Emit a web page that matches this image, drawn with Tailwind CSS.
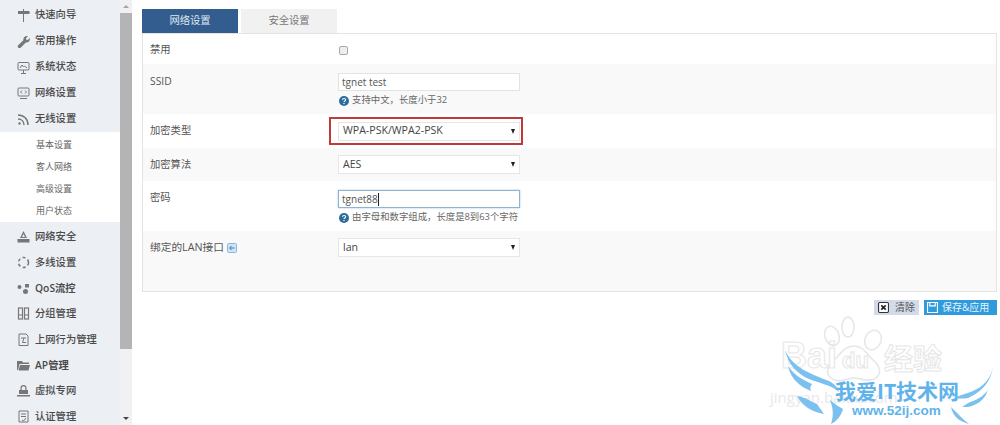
<!DOCTYPE html>
<html lang="zh-CN">

<head>
    <meta charset="UTF-8">
    <title>无线设置</title>
    <script src="https://cdn.jsdelivr.net/npm/@tailwindcss/browser@4"></script>
</head>

<body class="relative w-[1000px] h-[425px] overflow-hidden bg-white text-[#555] font-['Open_Sans','Noto_Sans_CJK_SC',sans-serif]">
    <div class="flex h-[425px]">
        <!-- sidebar -->
        <aside class="flex w-[132px] shrink-0">
            <nav class="w-[120px] bg-[#eceff4] pt-[2px] text-[10.3px] text-[#4a4a4a] font-medium overflow-hidden">
                <a class="flex items-center h-[26px] pl-[17px] gap-[5px]">
                    <svg class="w-[13px] h-[13px] text-[#777]" viewBox="0 0 13 13" fill="currentColor"><path d="M6 0h1v2h5l1 1.500-1 1.500H7v8H6V5H1V2h5z"/></svg>
                    快速向导
                </a>
                <a class="flex items-center h-[26px] pl-[17px] gap-[5px]">
                    <svg class="w-[13px] h-[13px] text-[#777]" viewBox="0 0 13 13" fill="currentColor"><path d="M1 12.500 .5 11l6-6c-.5-2 1-4 3.500-4l1 .3-2 2 .3 1.400 1.400.3 2-2 .2 1c0 2.500-2 4-4 3.500l-6 6z"/></svg>
                    常用操作
                </a>
                <a class="flex items-center h-[26px] pl-[17px] gap-[5px]">
                    <svg class="w-[13px] h-[13px] text-[#777]" viewBox="0 0 13 13" fill="none" stroke="currentColor"><rect x="1" y="1.500" width="11" height="7.500" rx="1"/><path d="M3 7l2-3 1.500 2 1-1L10 7M6.500 9v3M4 12.500h5"/></svg>
                    系统状态
                </a>
                <a class="flex items-center h-[26px] pl-[17px] gap-[5px]">
                    <svg class="w-[13px] h-[13px] text-[#777]" viewBox="0 0 13 13" fill="none" stroke="currentColor"><rect x="1" y="1" width="11" height="8" rx="1"/><path d="M5 3.500 3.500 5 5 6.500M8 3.500 9.500 5 8 6.500M3 11.500h7"/></svg>
                    网络设置
                </a>
                <a class="flex items-center h-[26px] pl-[17px] gap-[5px]">
                    <svg class="w-[13px] h-[13px] text-[#777]" viewBox="0 0 13 13" fill="none" stroke="currentColor" stroke-width="1.500"><circle cx="2.500" cy="10.500" r="1.200" fill="currentColor" stroke="none"/><path d="M1 6c3.500 0 6 2.500 6 6M1 2c6 0 10 4 10 10"/></svg>
                    无线设置
                </a>
                <div class="bg-white h-[90px] mb-[2px] pt-[2px] text-[9px] text-[#666] font-normal">
                    <a class="flex items-center h-[22px] pl-[36px]">基本设置</a>
                    <a class="flex items-center h-[22px] pl-[36px]">客人网络</a>
                    <a class="flex items-center h-[22px] pl-[36px]">高级设置</a>
                    <a class="flex items-center h-[22px] pl-[36px]">用户状态</a>
                </div>
                <a class="flex items-center h-[25.7px] pl-[17px] gap-[5px]">
                    <svg class="w-[13px] h-[13px] text-[#777]" viewBox="0 0 13 13" fill="currentColor"><path d="M6.500 1 10 8H3zM6.500 4 5 7h3zM.5 9h12v3.500H.5z"/></svg>
                    网络安全
                </a>
                <a class="flex items-center h-[25.7px] pl-[17px] gap-[5px]">
                    <svg class="w-[13px] h-[13px] text-[#777]" viewBox="0 0 13 13" fill="none" stroke="currentColor" stroke-width="1.500" stroke-dasharray="3 2.500"><circle cx="6.500" cy="6.500" r="5"/></svg>
                    多线设置
                </a>
                <a class="flex items-center h-[25.7px] pl-[17px] gap-[5px] font-semibold">
                    <svg class="w-[13px] h-[13px] text-[#777]" viewBox="0 0 13 13" fill="currentColor"><circle cx="2.500" cy="5" r="2"/><rect x="8" y="2" width="4" height="3.500"/><circle cx="8.500" cy="9.500" r="2.500"/></svg>
                    QoS流控
                </a>
                <a class="flex items-center h-[25.7px] pl-[17px] gap-[5px]">
                    <svg class="w-[13px] h-[13px] text-[#777]" viewBox="0 0 13 13" fill="none" stroke="currentColor" stroke-width="1.200"><rect x="1.500" y="1" width="4" height="11"/><rect x="7.500" y="1" width="4" height="11"/><path d="M1.500 8h4M7.500 8h4"/></svg>
                    分组管理
                </a>
                <a class="flex items-center h-[25.7px] pl-[17px] gap-[5px]">
                    <svg class="w-[13px] h-[13px] text-[#777]" viewBox="0 0 13 13" fill="none" stroke="currentColor"><path d="M2 1h7l2 2v9.500H2zM4 5h5M7 5 5.500 9.500H9"/></svg>
                    上网行为管理
                </a>
                <a class="flex items-center h-[25.7px] pl-[17px] gap-[5px] font-semibold">
                    <svg class="w-[13px] h-[13px] text-[#777]" viewBox="0 0 13 13" fill="currentColor"><path d="M0 2h5l1 1.500h6V5H2.500L1 11H0zM3 6h10l-1.500 5.500H1.500z"/></svg>
                    AP管理
                </a>
                <a class="flex items-center h-[25.7px] pl-[17px] gap-[5px]">
                    <svg class="w-[13px] h-[13px] text-[#777]" viewBox="0 0 13 13" fill="currentColor"><path d="M3.500 6V4a3 3 0 0 1 6 0v2H8.300V4a1.800 1.800 0 0 0-3.600 0v2zM2 6h9v4H2zM0 11h13v1.500H0z"/></svg>
                    虚拟专网
                </a>
                <a class="flex items-center h-[25.7px] pl-[17px] gap-[5px]">
                    <svg class="w-[13px] h-[13px] text-[#777]" viewBox="0 0 13 13" fill="none" stroke="currentColor"><path d="M2 1h9v11H2zM4 4h5M4 6.500h5M5 10l1.500 1L9 8"/></svg>
                    认证管理
                </a>
            </nav>
            <!-- scrollbar -->
            <div class="w-[12px] bg-[#f1f1f1] flex flex-col items-center justify-between">
                <div class="flex flex-col items-center w-full h-[349px]">
                    <span class="h-[13px] flex items-center"><span class="border-x-[3px] border-x-transparent border-b-[3px] border-b-[#a3a3a3]"></span></span>
                    <span class="w-full flex-1 bg-[#b4b4b4]"></span>
                </div>
                <span class="h-[13px] flex items-center"><span class="border-x-[3px] border-x-transparent border-t-[3px] border-t-[#444]"></span></span>
            </div>
        </aside>

        <!-- main -->
        <main class="flex-1 pl-[10px] pr-[3px] pt-[9px] text-[10.3px]">
            <div class="flex gap-[3px] h-[24px]">
                <a class="flex items-center justify-center w-[96px] bg-[#335d8e] text-[#dfe7f0]">网络设置</a>
                <a class="flex items-center justify-center w-[96px] bg-[#f1f1f1] text-[#777]">安全设置</a>
            </div>
            <form class="border border-[#e4e4e4] h-[259px]">
                <div class="flex items-center h-[30px] pt-[2px] px-[7px]">
                    <label class="w-[188px]">禁用</label>
                    <input type="checkbox" class="appearance-none w-[9px] h-[9px] ml-[1px] border border-[#aaa] rounded-[2px] bg-[#eee]">
                </div>
                <div class="flex h-[50px] px-[7px] pt-[9px] bg-[#f9f9f9]">
                    <label class="w-[188px] pt-px">SSID</label>
                    <div class="w-[182px]">
                        <input type="text" value="tgnet test" class="block w-full h-[18px] px-[3px] bg-white border border-[#e3e3e3] text-[10px] text-[#555] outline-none">
                        <p class="flex items-center gap-[3px] mt-[2px] h-[15px] text-[9.400px] text-[#666]">
                            <svg class="w-[10px] h-[10px] text-[#2b6c9e] ml-px" viewBox="0 0 10 10"><circle cx="5" cy="5" r="5" fill="currentColor"/><path d="M3.400 3.800C3.500 2.100 6.700 2.100 6.700 3.800 6.700 5 5 4.900 5 6.100" fill="none" stroke="#fff" stroke-width="1.100"/><rect x="4.400" y="6.900" width="1.200" height="1.200" fill="#fff"/></svg>
                            支持中文，长度小于32
                        </p>
                    </div>
                </div>
                <div class="flex items-center h-[34px] px-[7px]">
                    <label class="w-[188px]">加密类型</label>
                    <div class="relative w-[182px] h-[19px] bg-white border border-[#e6e6e6] flex items-center pl-[4px] text-[10.600px] text-[#444]">
                        <select class="appearance-none w-full outline-none">
                            <option>WPA-PSK/WPA2-PSK</option>
                        </select>
                        <span class="absolute right-[4px] top-[6px] border-x-[2.500px] border-x-transparent border-t-[5px] border-t-[#222]"></span>
                    </div>
                </div>
                <div class="flex items-center h-[33px] px-[7px] bg-[#f9f9f9]">
                    <label class="w-[188px]">加密算法</label>
                    <div class="relative w-[182px] h-[19px] bg-white border border-[#e6e6e6] flex items-center pl-[4px] text-[10.600px] text-[#444]">
                        <select class="appearance-none w-full outline-none">
                            <option>AES</option>
                        </select>
                        <span class="absolute right-[4px] top-[6px] border-x-[2.500px] border-x-transparent border-t-[5px] border-t-[#222]"></span>
                    </div>
                </div>
                <div class="flex h-[50px] px-[7px] pt-[9px]">
                    <label class="w-[188px]">密码</label>
                    <div class="w-[182px]">
                        <div class="flex items-center w-full h-[18px] px-[3px] bg-white border border-[#8fb3d3] shadow-[0_0_2px_#a9c8e4] text-[10px] text-[#555]">
                            <span>tgnet88</span><span class="w-px h-[13px] bg-[#222]"></span>
                        </div>
                        <p class="flex items-center gap-[3px] mt-[2px] h-[15px] text-[9.400px] text-[#666] whitespace-nowrap">
                            <svg class="w-[10px] h-[10px] text-[#2b6c9e] ml-px shrink-0" viewBox="0 0 10 10"><circle cx="5" cy="5" r="5" fill="currentColor"/><path d="M3.400 3.800C3.500 2.100 6.700 2.100 6.700 3.800 6.700 5 5 4.900 5 6.100" fill="none" stroke="#fff" stroke-width="1.100"/><rect x="4.400" y="6.900" width="1.200" height="1.200" fill="#fff"/></svg>
                            由字母和数字组成，长度是8到63个字符
                        </p>
                    </div>
                </div>
                <div class="flex h-[60px] px-[7px] pt-[7px] bg-[#f9f9f9]">
                    <label class="flex items-center gap-[3px] w-[188px] h-[19px] text-[10.700px]">
                        绑定的LAN接口
                        <svg class="w-[10px] h-[10px]" viewBox="0 0 10 10"><rect x=".5" y=".5" width="9" height="9" rx="1" fill="#cfe4f5" stroke="#8db8d8"/><path d="M7.500 5H3M4.500 3 2.500 5l2 2" fill="none" stroke="#3b82b8"/></svg>
                    </label>
                    <div class="relative w-[182px] h-[19px] bg-white border border-[#e6e6e6] flex items-center pl-[4px] text-[10.600px] text-[#444]">
                        <select class="appearance-none w-full outline-none">
                            <option>lan</option>
                        </select>
                        <span class="absolute right-[4px] top-[6px] border-x-[2.500px] border-x-transparent border-t-[5px] border-t-[#222]"></span>
                    </div>
                </div>
            </form>
            <div class="flex justify-end gap-[5px] mt-[8px] text-[10px]">
                <button class="flex items-center gap-[6px] w-[45px] h-[15px] pl-[4px] bg-[#d3dbe8] text-[#555]">
                    <svg class="w-[11px] h-[11px]" viewBox="0 0 10 10"><rect x=".5" y=".5" width="9" height="9" rx="1" fill="#fff" stroke="#333"/><path d="M3 3l4 4M7 3 3 7" stroke="#222" stroke-width="1.500"/></svg>
                    清除
                </button>
                <button class="flex items-center gap-[4px] w-[73px] h-[15px] pl-[3px] bg-[#2f9bdc] text-[#e6f4fd]">
                    <svg class="w-[11px] h-[11px]" viewBox="0 0 10 10" fill="none" stroke="#fff"><path d="M.5.5h9v9h-9zM2.500.5v3h5v-3"/></svg>
                    保存&amp;应用
                </button>
            </div>
        </main>
    </div>

    <!-- annotation box -->
    <div class="absolute left-[329px] top-[117px] w-[194px] h-[28px] border-2 border-[#c0393b]"></div>

    <!-- watermark -->
    <div class="absolute left-[770px] top-[310px] w-[230px] h-[115px] pointer-events-none">
        <svg class="absolute inset-0" width="230" height="115" viewBox="0 0 230 115" fill="none" stroke="#e6e6e6" stroke-width="1.500">
            <ellipse cx="78" cy="17" rx="6" ry="10"/>
            <ellipse cx="62" cy="26" rx="7" ry="10" transform="rotate(-20 62 26)"/>
            <ellipse cx="103" cy="30" rx="8" ry="10" transform="rotate(25 103 30)"/>
            <path d="M84 36c10 0 14 10 20 15s8 12 2 17-16 0-22 0-16 6-23 0-2-14 3-18 10-14 20-14z"/>
        </svg>
        <span class="absolute left-[11px] top-[28px] text-[36px] leading-none font-bold text-white [-webkit-text-stroke:1px_#e6e6e6] font-['Liberation_Sans',sans-serif]">Bai</span>
        <span class="absolute left-[72px] top-[40px] text-[22px] leading-none font-bold text-white [-webkit-text-stroke:1px_#e6e6e6] font-['Liberation_Sans',sans-serif]">du</span>
        <span class="absolute left-[114px] top-[34px] text-[29px] leading-none font-bold text-white [-webkit-text-stroke:1px_#e6e6e6]">经验</span>
        <span class="absolute left-[0px] top-[80px] text-[15px] leading-none text-[#e8e8e8]">jingyan.baidu.com</span>
        <svg class="absolute inset-0" width="230" height="115" viewBox="0 0 230 115" fill="#7cc0ef">
            <path d="M15 40c8 18 26 24 44 31 6 3 9 7 10 11-8-7-20-9-30-13C27 64 18 54 15 40z"/>
            <path d="M18 56c7 10 14 13 24 18-2 3-2 5-1 7C31 77 21 70 18 56z"/>
            <path d="M27 86c8 1 13 5 20 8l7 10c-12-2-22-8-27-18z"/>
            <path d="M60 90c3 8 4 15 1 24 6-3 10-8 12-15-4-2-8-5-13-9z"/>
            <path d="M223 56c-2 14-11 21-20 25-7 3-14 4-20 8 7-1 12 0 15-1 11-5 23-14 25-32z"/>
            <path d="M218 80c-5 7-12 10-20 13l-6 4 5 0c9-1 18-7 21-17z"/>
            <path d="M181 97c2 9 7 14 18 17-5-4-11-10-18-17z"/>
        </svg>
        <span class="absolute left-[65px] top-[71px] text-[21px] leading-none font-bold text-[#5fb3ea] whitespace-nowrap">我爱IT技术网</span>
        <span class="absolute left-[82px] top-[94px] text-[13.500px] leading-none font-bold text-[#5fb3ea] font-['Liberation_Sans',sans-serif]">www.52ij.com</span>
    </div>
</body>

</html>
